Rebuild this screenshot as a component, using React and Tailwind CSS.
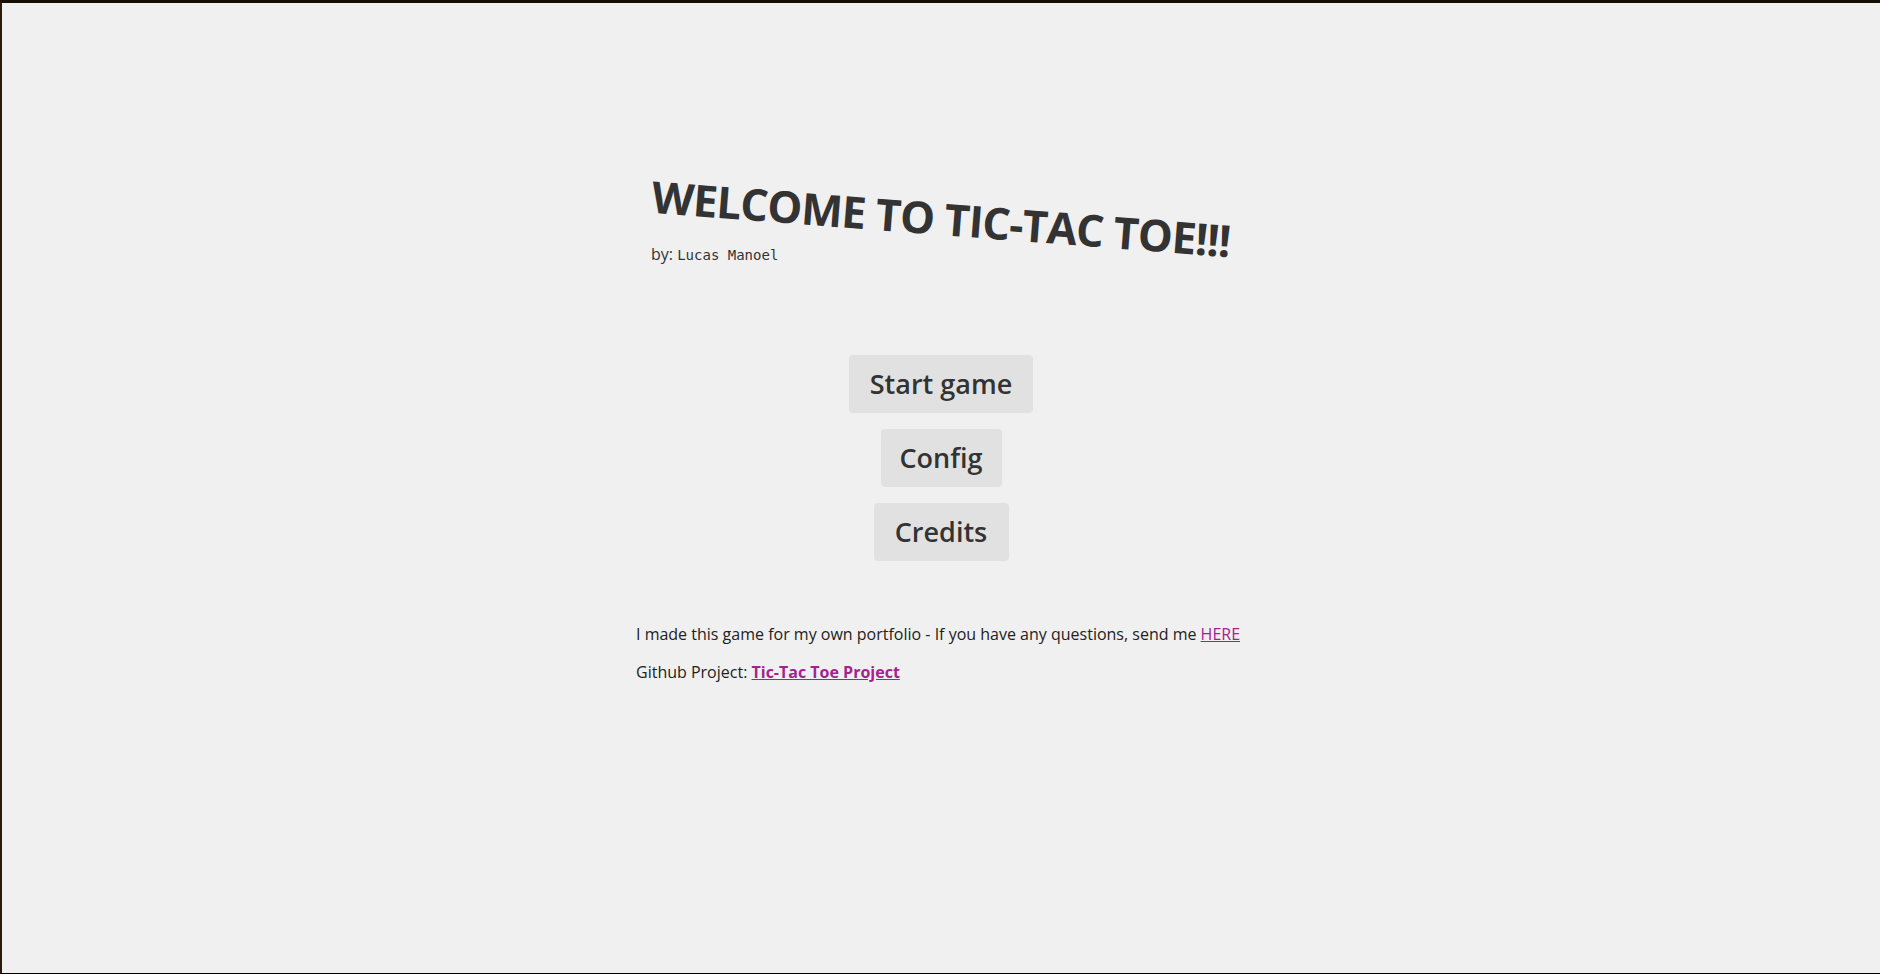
import React from "react";

export default function App() {
  const sans = { fontFamily: '"Open Sans", "Liberation Sans", sans-serif' };
  return (
    <div
      className="relative w-full h-[974px] bg-[#f0f0f0] border-t-[3px] border-l-2 border-b border-t-[#150f05] border-l-[#2a1a0a] border-b-[#000] text-[#333] overflow-hidden"
      style={sans}
    >
      <div className="mx-auto w-[610px] flex flex-col">
        <header className="mt-[189px] px-[15px]">
          <h1 className="text-center text-[44px] leading-[52px] font-bold text-[#333] rotate-[4.4deg] whitespace-nowrap tracking-[-1px]">
            WELCOME TO TIC-TAC TOE!!!
          </h1>
          <p className="text-[16px] leading-[20px] text-[#333]">
            by:{" "}
            <span className="text-[14px]" style={{ fontFamily: '"DejaVu Sans Mono", monospace' }}>
              Lucas Manoel
            </span>
          </p>
        </header>

        <nav className="mt-[90px] flex flex-col items-center gap-4">
          <button className="w-[184px] h-[58px] rounded bg-[#e1e1e1] text-[27px] font-semibold text-[#333]">
            Start game
          </button>
          <button className="w-[121px] h-[58px] rounded bg-[#e1e1e1] text-[27px] font-semibold text-[#333]">
            Config
          </button>
          <button className="w-[135px] h-[58px] rounded bg-[#e1e1e1] text-[27px] font-semibold text-[#333]">
            Credits
          </button>
        </nav>

        <footer className="mt-[61px] text-[16px] leading-[24px] text-[#222] whitespace-nowrap">
          <p>
            I made this game for my own portfolio - If you have any questions, send me{" "}
            <a href="#" className="underline text-[#a3238d]">HERE</a>
          </p>
          <p className="mt-[14px]">
            Github Project:{" "}
            <a href="#" className="underline font-bold text-[#a3238d]">Tic-Tac Toe Project</a>
          </p>
        </footer>
      </div>
      <div className="absolute bottom-[-1px] left-[72px] w-[38px] h-[1px] bg-[#4e8e8e]" />
    </div>
  );
}
